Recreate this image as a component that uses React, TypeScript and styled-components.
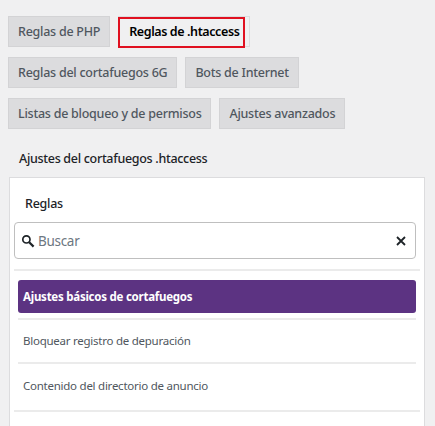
import React from 'react';
import styled, { createGlobalStyle } from 'styled-components';

const GlobalStyle = createGlobalStyle`
  html, body {
    margin: 0;
    padding: 0;
    height: 100%;
    overflow: hidden;
    background: #f0f0f1;
    font-family: "Noto Sans", "Open Sans", sans-serif;
  }
`;

const Page = styled.div`
  width: 435px;
  height: 426px;
  overflow: hidden;
  padding: 16px 0 0 8px;
  box-sizing: border-box;
`;

const TabRow = styled.div`
  display: flex;
  gap: 8px;
  margin-bottom: 10px;
`;

const Tab = styled.div<{ $active?: boolean }>`
  position: relative;
  box-sizing: border-box;
  height: 31px;
  padding: 0 ${({ $active }) => ($active ? 10 : 9)}px;
  display: flex;
  align-items: center;
  font-size: 12.5px;
  letter-spacing: ${({ $active }) => ($active ? -0.4 : -0.25)}px;
  font-weight: ${({ $active }) => ($active ? 600 : 500)};
  color: ${({ $active }) => ($active ? '#000' : '#50575e')};
  background: ${({ $active }) => ($active ? '#f0f0f1' : '#dcdcde')};
  border: 1px solid ${({ $active }) => ($active ? '#dcdcde' : '#d3d3d5')};
  white-space: nowrap;
`;

const Highlight = styled.span`
  position: absolute;
  left: -1px;
  top: 0;
  right: 4px;
  bottom: -2px;
  border: 2px solid #e01020;
`;

const Heading = styled.h2`
  margin: 21px 0 9px 11px;
  font-size: 12.5px;
  letter-spacing: -0.3px;
  line-height: 18px;
  font-weight: 500;
  color: #1d2327;
`;

const Panel = styled.div`
  width: 416px;
  height: 260px;
  margin-left: 1px;
  box-sizing: border-box;
  background: #fff;
  border: 1px solid #dcdcde;
  padding: 17px 4px 0 4px;
`;

const PanelTitle = styled.div`
  margin-left: 11px;
  font-size: 12.5px;
  letter-spacing: -0.25px;
  line-height: 18px;
  font-weight: 500;
  color: #1d2327;
  margin-bottom: 9px;
`;

const SearchBox = styled.div`
  width: 402px;
  height: 37px;
  box-sizing: border-box;
  display: flex;
  align-items: center;
  padding: 0 9px 0 6px;
  gap: 3px;
  border: 1.5px solid #bfbfbf;
  border-radius: 4px;
  background: #fff;
`;

const SearchText = styled.span`
  flex: 1;
  font-size: 13.5px;
  letter-spacing: -0.3px;
  color: #6c7781;
`;

const WideRule = styled.div`
  height: 2px;
  width: 406px;
  background: #ebebeb;
  margin: 10px 0 9px;
`;

const List = styled.div`
  margin-left: 4px;
  width: 398px;
`;

const ActiveItem = styled.div`
  height: 33px;
  box-sizing: border-box;
  display: flex;
  align-items: center;
  padding-left: 5px;
  background: #5c3382;
  border-radius: 3px;
  color: #fff;
  font-size: 11.5px;
  letter-spacing: -0.25px;
  font-weight: 700;
`;

const Item = styled.div<{ $tall?: boolean }>`
  height: ${({ $tall }) => ($tall ? 48 : 44)}px;
  box-sizing: border-box;
  display: flex;
  align-items: ${({ $tall }) => ($tall ? 'flex-start' : 'center')};
  padding: ${({ $tall }) => ($tall ? '14px 0 0 5px' : '0 0 2px 5px')};
  font-size: 11.5px;
  letter-spacing: -0.25px;
  color: #50575e;
  border-top: 2px solid #ebebeb;
`;

const FirstGap = styled.div`
  height: 5px;
`;

const LastRule = styled.div`
  height: 2px;
  width: 406px;
  margin-left: -4px;
  background: #ebebeb;
`;

const SearchIcon = () => (
  <svg width="14" height="14" viewBox="0 0 14 14" fill="none">
    <circle cx="5.4" cy="5.4" r="3.6" stroke="#1d2327" strokeWidth="1.7" />
    <path d="M8.2 8.2 L12.6 12.6" stroke="#1d2327" strokeWidth="2.2" />
  </svg>
);

const ClearIcon = () => (
  <svg width="10" height="10" viewBox="0 0 10 10" fill="none">
    <path d="M1 1 L9 9 M9 1 L1 9" stroke="#1d2327" strokeWidth="1.8" />
  </svg>
);

export default function App() {
  return (
    <Page>
      <GlobalStyle />
      <TabRow>
        <Tab>Reglas de PHP</Tab>
        <Tab $active>
          Reglas de .htaccess
          <Highlight />
        </Tab>
      </TabRow>
      <TabRow>
        <Tab>Reglas del cortafuegos 6G</Tab>
        <Tab>Bots de Internet</Tab>
      </TabRow>
      <TabRow>
        <Tab>Listas de bloqueo y de permisos</Tab>
        <Tab>Ajustes avanzados</Tab>
      </TabRow>
      <Heading>Ajustes del cortafuegos .htaccess</Heading>
      <Panel>
        <PanelTitle>Reglas</PanelTitle>
        <SearchBox>
          <SearchIcon />
          <SearchText>Buscar</SearchText>
          <ClearIcon />
        </SearchBox>
        <WideRule />
        <List>
          <ActiveItem>Ajustes básicos de cortafuegos</ActiveItem>
          <FirstGap />
          <Item>Bloquear registro de depuración</Item>
          <Item $tall>Contenido del directorio de anuncio</Item>
          <LastRule />
        </List>
      </Panel>
    </Page>
  );
}
